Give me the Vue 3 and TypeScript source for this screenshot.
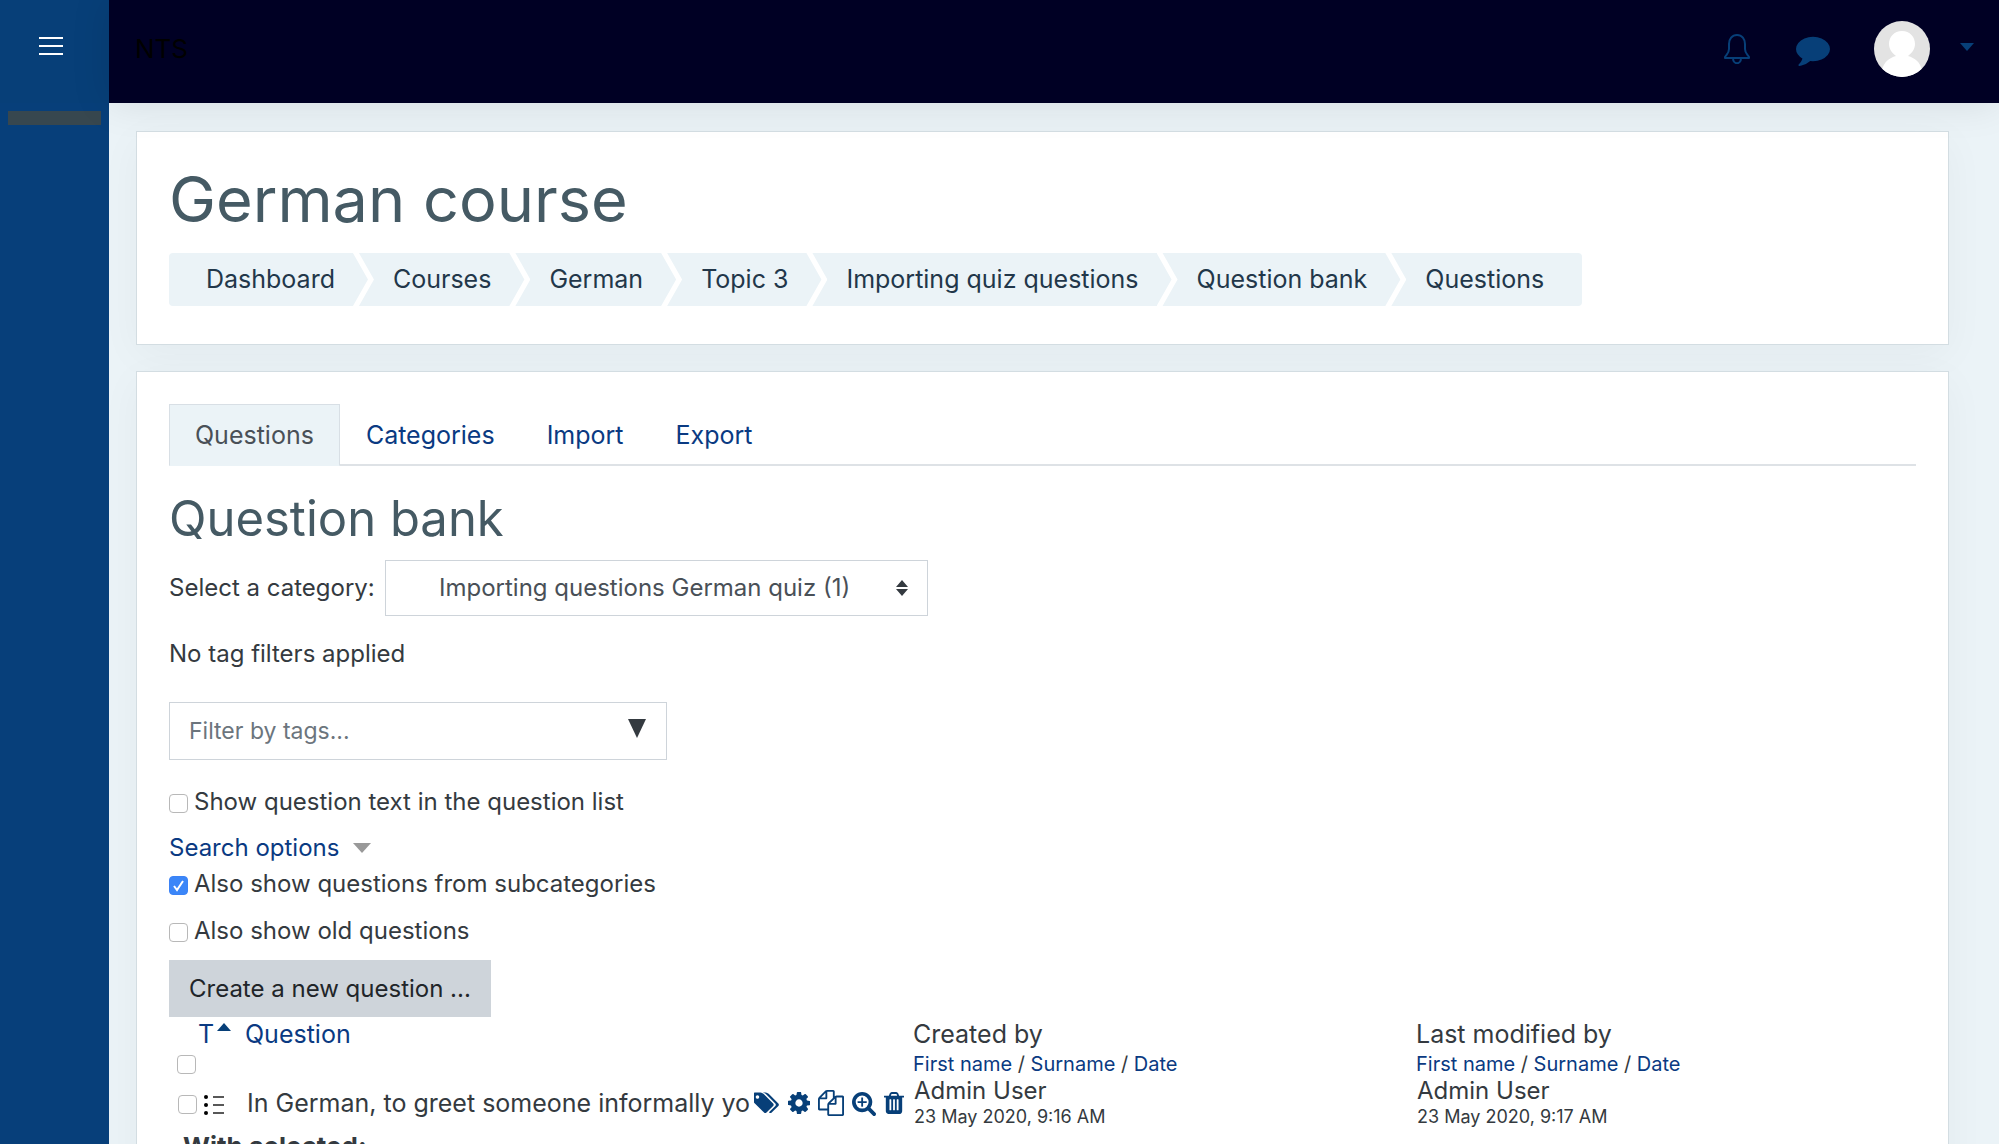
<script setup lang="ts">
import { ref } from 'vue'

interface Action {
  name: string
  box: string
  width: number
  path: string
}

const crumbs: string[] = [
  'Dashboard',
  'Courses',
  'German',
  'Topic 3',
  'Importing quiz questions',
  'Question bank',
  'Questions',
]
const tabs: string[] = ['Questions', 'Categories', 'Import', 'Export']
const sortKeys: string[] = ['First name', 'Surname', 'Date']

const showText = ref(false)
const showSub = ref(true)
const showOld = ref(false)
const category = ref('german')

const actions: Action[] = [
  {
    name: 'Manage tags',
    box: '0 0 1920 1792',
    width: 26,
    path: 'M384 448q0-53-37.5-90.5t-90.5-37.5-90.5 37.5-37.5 90.5 37.5 90.5 90.5 37.5 90.5-37.5 37.5-90.5zm1067 576q0 53-37 90l-491 492q-39 37-91 37-53 0-90-37l-715-716q-38-37-64.5-101t-26.5-117v-416q0-52 38-90t90-38h416q53 0 117 26.5t102 64.5l715 714q37 39 37 91zm384 0q0 53-37 90l-491 492q-39 37-91 37-36 0-59-14t-53-45l470-470q37-37 37-90 0-52-37-91l-715-714q-38-38-102-64.5t-117-26.5h224q53 0 117 26.5t102 64.5l715 714q37 39 37 91z',
  },
  {
    name: 'Edit question',
    box: '128 0 1536 1792',
    width: 22,
    path: 'M1152 896q0-106-75-181t-181-75-181 75-75 181 75 181 181 75 181-75 75-181zm512-109v222q0 12-8 23t-20 13l-185 28q-19 54-39 91 35 50 107 138 10 12 10 25t-9 23q-27 37-99 108t-94 71q-12 0-26-9l-138-108q-44 23-91 38-16 136-29 186-7 28-36 28h-222q-14 0-24.5-8.5t-11.5-21.5l-28-184q-49-16-90-37l-141 107q-10 9-25 9-14 0-25-11-126-114-165-168-7-10-7-23 0-12 8-23 15-21 51-66.5t54-70.5q-27-50-41-99l-183-27q-13-2-21-12.5t-8-23.5v-222q0-12 8-23t19-13l186-28q14-46 39-92-40-57-107-138-10-12-10-24 0-10 9-23 26-36 98.5-107.5t94.5-71.5q13 0 26 10l138 107q44-23 91-38 16-136 29-186 7-28 36-28h222q14 0 24.5 8.5t11.5 21.5l28 184q49 16 90 37l142-107q9-9 24-9 13 0 25 10 129 119 165 170 7 8 7 22 0 12-8 23-15 21-51 66.5t-54 70.5q26 50 41 98l183 28q13 2 21 12.5t8 23.5z',
  },
  {
    name: 'Duplicate',
    box: '0 0 1792 1792',
    width: 26,
    path: 'M1696 384q40 0 68 28t28 68v1216q0 40-28 68t-68 28h-960q-40 0-68-28t-28-68v-288h-544q-40 0-68-28t-28-68v-672q0-40 20-88t48-76l408-408q28-28 76-48t88-20h416q40 0 68 28t28 68v328q68-40 128-40h416zm-544 213l-299 299h299v-299zm-640-384l-299 299h299v-299zm196 647l316-316v-416h-384v416q0 40-28 68t-68 28h-416v640h512v-256q0-40 20-88t48-76zm956 804v-1152h-384v416q0 40-28 68t-68 28h-416v640h896z',
  },
  {
    name: 'Preview',
    box: '64 0 1664 1792',
    width: 24,
    path: 'M1088 800v64q0 13-9.5 22.5t-22.5 9.5h-224v224q0 13-9.5 22.5t-22.5 9.5h-64q-13 0-22.5-9.5t-9.5-22.5v-224h-224q-13 0-22.5-9.5t-9.5-22.5v-64q0-13 9.5-22.5t22.5-9.5h224v-224q0-13 9.5-22.5t22.5-9.5h64q13 0 22.5 9.5t9.5 22.5v224h224q13 0 22.5 9.5t9.5 22.5zm128 32q0-185-131.5-316.5t-316.5-131.5-316.5 131.5-131.5 316.5 131.5 316.5 316.5 131.5 316.5-131.5 131.5-316.5zm512 832q0 53-37.5 90.5t-90.5 37.5q-54 0-90-38l-343-342q-179 124-399 124-143 0-273.5-55.5t-225-150-150-225-55.5-273.5 55.5-273.5 150-225 225-150 273.5-55.5 273.5 55.5 225 150 150 225 55.5 273.5q0 220-124 399l343 343q37 37 37 90z',
  },
  {
    name: 'Delete',
    box: '192 0 1408 1792',
    width: 20,
    path: 'M704 1376v-704q0-14-9-23t-23-9h-64q-14 0-23 9t-9 23v704q0 14 9 23t23 9h64q14 0 23-9t9-23zm256 0v-704q0-14-9-23t-23-9h-64q-14 0-23 9t-9 23v704q0 14 9 23t23 9h64q14 0 23-9t9-23zm256 0v-704q0-14-9-23t-23-9h-64q-14 0-23 9t-9 23v704q0 14 9 23t23 9h64q14 0 23-9t9-23zm-544-992h448l-48-117q-7-9-17-11h-317q-10 2-17 11zm928 32v64q0 14-9 23t-23 9h-96v948q0 83-47 143.5t-113 60.5h-832q-66 0-113-58.5t-47-141.5v-952h-96q-14 0-23-9t-9-23v-64q0-14 9-23t23-9h309l70-167q15-37 54-63t79-26h320q40 0 79 26t54 63l70 167h309q14 0 23 9t9 23z',
  },
]
</script>

<template>
  <div class="shell">
    <aside class="side">
      <button class="menu" type="button" aria-label="Open menu">
        <svg width="24" height="18" viewBox="0 0 24 18" fill="#fff" aria-hidden="true">
          <path d="M0 0h24v2H0zM0 8h24v2H0zM0 16h24v2H0z" />
        </svg>
      </button>
      <div class="side-item"></div>
    </aside>

    <div class="body">
      <header class="top">
        <a class="brand" href="#">NTS</a>
        <nav class="tools" aria-label="User">
          <button class="tool bell" type="button" aria-label="Notifications">
            <svg width="26" height="30" viewBox="0 0 26 30" fill="none" stroke="#073f78" stroke-width="2" stroke-linejoin="round" aria-hidden="true">
              <path d="M13 1c-5 0-8 4-8 9v5c0 4-2 5-4 8v1h24v-1c-2-3-4-4-4-8v-5c0-5-3-9-8-9z" />
              <path d="M9 24c0 7 8 7 8 0" />
            </svg>
          </button>
          <button class="tool chat" type="button" aria-label="Messages">
            <svg width="34" height="34" viewBox="0 0 1792 1792" fill="#073f78" aria-hidden="true">
              <path d="M1792 896q0 174-120 321.5t-326 233-450 85.5q-70 0-145-8-198 175-460 242-49 14-114 22h-5q-15 0-27-10.5t-16-27.5v-1q-3-4-.5-12t2-10 4.5-9.5l6-9 7-8.5 8-9q7-8 31-34.5t34.5-38 31-39.5 32.5-51 27-59 26-76q-157-89-247.5-220t-90.5-281q0-174 120-321.5t326-233 450-85.5 450 85.5 326 233 120 321.5z" />
            </svg>
          </button>
          <button class="tool user" type="button" aria-label="User menu">
            <svg width="56" height="56" viewBox="0 0 56 56" aria-hidden="true">
              <defs>
                <clipPath id="face"><circle cx="28" cy="28" r="28" /></clipPath>
              </defs>
              <g clip-path="url(#face)">
                <path fill="#e3e3e3" d="M0 0h56v56H0z" />
                <path fill="#fff" d="M28 10c-8 0-13 6-13 13 0 5 3 9 7 12-7 2-12 6-14 14v8h40v-8c-2-8-7-12-14-14 4-3 7-7 7-12 0-7-5-13-13-13z" />
              </g>
            </svg>
            <svg class="caret" width="14" height="8" viewBox="0 0 14 8" fill="#073f78" aria-hidden="true">
              <path d="M0 0h14L7 8z" />
            </svg>
          </button>
        </nav>
      </header>

      <main class="main">
        <section class="card intro">
          <h1>German course</h1>
          <nav aria-label="Breadcrumb">
            <ol class="crumbs">
              <li v-for="c in crumbs" :key="c">
                <a href="#">{{ c }}</a>
              </li>
            </ol>
          </nav>
        </section>

        <section class="card bank">
          <ul class="tabs">
            <li v-for="(t, i) in tabs" :key="t">
              <a href="#" :class="{ active: i === 0 }">{{ t }}</a>
            </li>
          </ul>

          <h2>Question bank</h2>

          <div class="category">
            <label for="category">Select a category:</label>
            <div class="pick">
              <select id="category" v-model="category">
                <option value="german">Importing questions German quiz (1)</option>
              </select>
              <svg width="12" height="16" viewBox="0 0 12 16" fill="#343a40" aria-hidden="true">
                <path d="M6 0l6 7H0zM6 16l6-7H0z" />
              </svg>
            </div>
          </div>

          <p class="none">No tag filters applied</p>

          <div class="filter">
            <input type="text" placeholder="Filter by tags..." aria-label="Filter by tags" />
            <svg width="18" height="19" viewBox="0 0 18 19" fill="#343a40" aria-hidden="true">
              <path d="M0 0h18L9 19z" />
            </svg>
          </div>

          <label class="check text"><input v-model="showText" type="checkbox" />Show question text in the question list</label>
          <a class="options" href="#">
            Search options
            <svg width="18" height="10" viewBox="0 0 18 10" fill="#999" aria-hidden="true">
              <path d="M0 0h18L9 10z" />
            </svg>
          </a>
          <label class="check"><input v-model="showSub" type="checkbox" />Also show questions from subcategories</label>
          <label class="check old"><input v-model="showOld" type="checkbox" />Also show old questions</label>

          <button class="create" type="button">Create a new question ...</button>

          <table>
            <colgroup>
              <col class="c-check" />
              <col class="c-type" />
              <col class="c-question" />
              <col class="c-created" />
              <col />
            </colgroup>
            <thead>
              <tr>
                <th class="all"><input type="checkbox" aria-label="Select all" /></th>
                <th>
                  <a class="sort" href="#">
                    T
                    <svg width="14" height="8" viewBox="0 0 14 8" fill="#073f78" aria-hidden="true">
                      <path d="M0 8h14L7 0z" />
                    </svg>
                  </a>
                </th>
                <th><a href="#">Question</a></th>
                <th v-for="h in ['Created by', 'Last modified by']" :key="h">
                  {{ h }}
                  <div class="keys">
                    <template v-for="(k, i) in sortKeys" :key="k"><template v-if="i"> / </template><a href="#">{{ k }}</a></template>
                  </div>
                </th>
              </tr>
            </thead>
            <tbody>
              <tr>
                <td class="one"><input type="checkbox" aria-label="Select question" /></td>
                <td class="type">
                  <svg width="20" height="20" viewBox="0 0 20 20" aria-hidden="true">
                    <path d="M9 2h11M9 10h11M9 18h11" stroke="#222" stroke-width="1.5" />
                    <circle cx="2" cy="2" r="2" />
                    <circle cx="2" cy="10" r="2" />
                    <circle cx="2" cy="18" r="2" />
                  </svg>
                </td>
                <td>
                  <div class="question">
                    <span class="title">In German, to greet someone informally yo</span>
                    <a v-for="a in actions" :key="a.name" href="#" :aria-label="a.name">
                      <svg :viewBox="a.box" :width="a.width" height="26" fill="#073f78" aria-hidden="true">
                        <path :d="a.path" />
                      </svg>
                    </a>
                  </div>
                </td>
                <td>Admin User<div class="date">23 May 2020, 9:16 AM</div></td>
                <td>Admin User<div class="date">23 May 2020, 9:17 AM</div></td>
              </tr>
            </tbody>
          </table>

          <strong class="selected">With selected:</strong>
        </section>
      </main>
    </div>
  </div>
</template>

<style>
html,
body {
  margin: 0;
  overflow: hidden;
}
</style>

<style scoped>
* {
  box-sizing: border-box;
}

.shell {
  display: flex;
  height: 100vh;
  background: #ebf3f7;
  color: #343a40;
  font: 400 24px/36px Inter, "Open Sans", sans-serif;
}

a {
  color: #0a3a82;
  text-decoration: none;
}

button {
  border: 0;
  padding: 0;
  background: none;
  font: inherit;
  color: inherit;
}

svg {
  display: block;
}

/* Left rail */
.side {
  flex: 0 0 109px;
  background: #073f7a;
}

.menu {
  display: flex;
  align-items: center;
  width: 100%;
  height: 103px;
  padding: 0 0 11px 39px;
  background: #073f78;
}

.side-item {
  height: 14px;
  margin: 8px;
  background: #37474f;
}

.body {
  flex: 1;
  min-width: 0;
  display: flex;
  flex-direction: column;
}

/* Top bar */
.top {
  position: relative;
  flex: none;
  display: flex;
  align-items: center;
  justify-content: space-between;
  height: 103px;
  padding: 0 25px 5px 26px;
  background: #000024;
  box-shadow: 0 0 40px rgba(0, 0, 0, 0.1);
}

.brand {
  color: #000;
  font-size: 26px;
}

.tools {
  display: flex;
  align-items: center;
}

.chat {
  margin: 0 44px 0 46px;
}

.user {
  display: flex;
  align-items: center;
  gap: 30px;
}

.caret {
  margin-bottom: 4px;
}

/* Cards */
.main {
  flex: 1;
  min-height: 0;
  padding: 28px 50px 0 27px;
  overflow: hidden;
}

.card {
  padding: 32px;
  border: 1px solid #d3dde2;
  background: #fff;
  box-shadow: 0 10px 40px rgba(0, 0, 0, 0.04);
}

.intro {
  margin-bottom: 26px;
  padding-bottom: 38px;
}

h1,
h2 {
  margin: 0;
  color: #455a64;
  font-weight: 400;
}

h1 {
  margin-bottom: 19px;
  font-size: 63px;
  line-height: 70px;
}

h2 {
  margin: 24px 0 12px;
  font-size: 49px;
  line-height: 58px;
}

.crumbs {
  display: flex;
  width: fit-content;
  margin: 0;
  padding: 0;
  overflow: hidden;
  border-radius: 4px;
  background: #ebf3f7;
  list-style: none;
}

.crumbs li {
  display: flex;
  padding-left: 19px;
}

.crumbs li:first-child {
  padding-left: 37px;
}

.crumbs li:last-child {
  padding-right: 38px;
}

.crumbs a {
  color: #22374a;
  font-size: 25px;
  line-height: 53px;
}

/* White chevron between two crumbs */
.crumbs li:not(:last-child)::after {
  content: "";
  width: 21px;
  margin-left: 18px;
  background: #fff;
  clip-path: polygon(0 0, 6px 0, 100% 50%, 6px 100%, 0 100%, 15px 50%);
}

.tabs {
  display: flex;
  margin: 0;
  padding: 0;
  border-bottom: 2px solid #dee2e6;
  list-style: none;
}

.tabs a {
  display: block;
  height: 62px;
  margin-bottom: -2px;
  padding: 0 25px;
  border: 1px solid transparent;
  font-size: 25px;
  line-height: 60px;
}

.tabs .active {
  border-color: #d8dfe5;
  border-bottom-color: #ebf3f7;
  background: #ebf3f7;
  color: #495057;
}

/* Filters */
.category {
  display: flex;
  align-items: center;
}

.category label {
  flex: 0 0 216px;
}

.pick,
.filter {
  position: relative;
}

.pick {
  width: 543px;
}

.filter {
  width: 498px;
}

select,
.filter input {
  display: block;
  width: 100%;
  border: 1px solid #ced4da;
  border-radius: 0;
  background: #fff;
  color: #495057;
  font: inherit;
}

select {
  height: 56px;
  padding: 0 40px 0 53px;
  appearance: none;
}

.pick svg {
  position: absolute;
  top: 20px;
  right: 20px;
}

.none {
  margin: 20px 0 30px;
}

.filter input {
  height: 58px;
  padding: 0 19px;
  font-size: 23px;
}

.filter input::placeholder {
  color: #6c757d;
  opacity: 1;
}

.filter svg {
  position: absolute;
  top: 17px;
  right: 21px;
}

.check {
  display: flex;
  align-items: center;
  gap: 6px;
  width: fit-content;
}

.text {
  margin: 24px 0 10px;
}

.old {
  margin: 11px 0;
}

input[type='checkbox'] {
  flex: none;
  display: block;
  width: 19px;
  height: 19px;
  margin: 0;
  border: 1px solid #b8b8b8;
  border-radius: 4px;
  background: #fff;
  appearance: none;
}

.check input {
  margin-top: 2px;
}

input[type='checkbox']:checked {
  border-color: #3b82f6;
  background: #3b86f8 url("data:image/svg+xml,%3Csvg xmlns='http://www.w3.org/2000/svg' viewBox='0 0 17 17'%3E%3Cpath d='M4 9l3 4 6-9' fill='none' stroke='%23fff' stroke-width='2'/%3E%3C/svg%3E");
}

.options {
  display: flex;
  align-items: center;
  gap: 14px;
  width: fit-content;
}

.create {
  display: block;
  height: 57px;
  padding: 0 20px;
  background: #ced4da;
  color: #212529;
}

/* Question table */
table {
  width: 100%;
  border-collapse: collapse;
  table-layout: fixed;
}

.c-check {
  width: 29px;
}

.c-type {
  width: 47px;
}

.c-question {
  width: 668px;
}

.c-created {
  width: 503px;
}

th,
td {
  padding: 0;
  text-align: left;
  vertical-align: top;
  font-weight: 400;
}

th {
  height: 60px;
  font-size: 25px;
  line-height: 34px;
}

th.all {
  padding: 0 0 3px 8px;
  vertical-align: bottom;
}

.sort {
  display: flex;
  gap: 3px;
}

.sort svg {
  margin-top: 6px;
}

td {
  padding-left: 1px;
  line-height: 28px;
}

td.one {
  padding: 18px 0 0 9px;
}

td.type {
  padding: 18px 0 0 6px;
}

.question {
  display: flex;
  align-items: center;
  padding: 8px 0 0 1px;
  line-height: 36px;
}

.title {
  width: 507px;
  overflow: hidden;
  font-size: 25px;
  white-space: nowrap;
}

.question a + a {
  margin-left: 8px;
}

.keys {
  font-size: 20px;
  line-height: 26px;
}

.date {
  font-size: 18px;
  line-height: 24px;
}

.selected {
  display: block;
  margin: 0 0 20px 14px;
  font-size: 26px;
}
</style>
